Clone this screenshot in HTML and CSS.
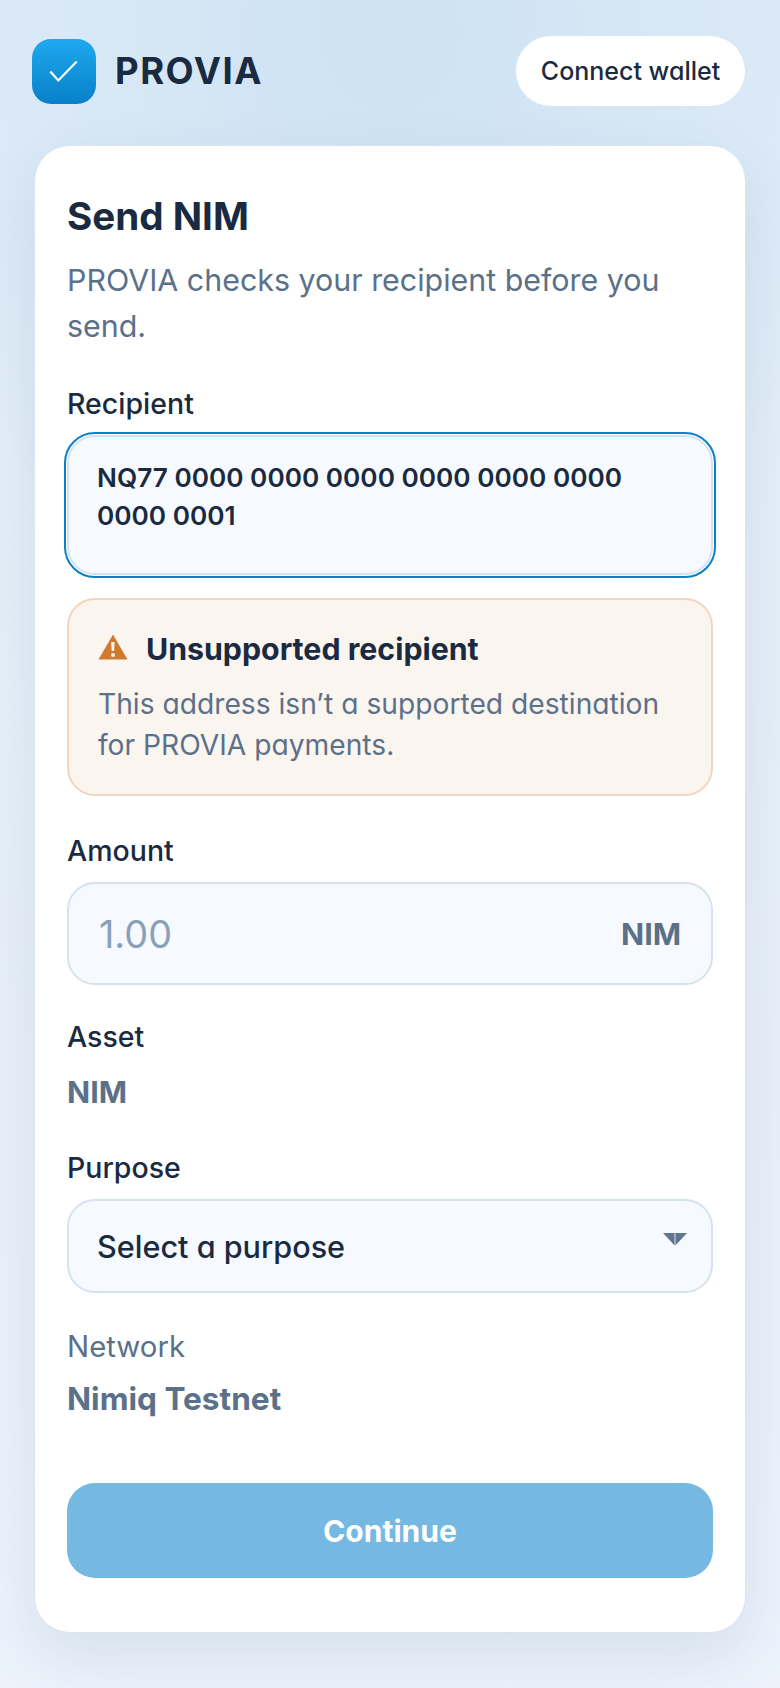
FILE: index.html
```html
<!DOCTYPE html>
<html lang="en">
<head>
  <meta charset="UTF-8">
  <meta name="viewport" content="width=device-width, initial-scale=1.0">
  <title>PROVIA</title>
  <link rel="stylesheet" href="styles.css">
</head>
<body>
  <header class="top-bar">
    <div class="brand">
      <div class="brand-logo">
        <svg width="30" height="24" viewBox="0 0 30 24" fill="none"><path d="M1.3 12.5 L9.3 21.5 L27.7 2.5" stroke="#fff" stroke-width="2.2"/></svg>
      </div>
      <span class="brand-name">PROVIA</span>
    </div>
    <button class="connect-btn">Connect wallet</button>
  </header>

  <main class="card">
    <h1 class="card-title">Send NIM</h1>
    <p class="card-sub">PROVIA checks your recipient before you send.</p>

    <div class="label label-recipient">Recipient</div>
    <div class="recipient-box">NQ77 0000 0000 0000 0000 0000 0000 0000 0001</div>

    <!-- Warning -->
    <div class="warning">
      <div class="warning-head">
        <svg class="warning-icon" width="30" height="26" viewBox="0 0 30 26"><path fill-rule="evenodd" fill="#cf7a30" d="M15 0.5 L29.5 25.5 L0.5 25.5 Z M13.2 8 L13.7 17 L16.1 17 L16.6 8 Z M15 19 A2 2 0 1 0 15 23 A2 2 0 1 0 15 19 Z"/></svg>
        <span>Unsupported recipient</span>
      </div>
      <p class="warning-text">This address isn’t a supported destination for PROVIA payments.</p>
    </div>

    <div class="label label-amount">Amount</div>
    <div class="amount-box">
      <span class="amount-value">1.00</span>
      <span class="amount-unit">NIM</span>
    </div>

    <div class="label label-asset">Asset</div>
    <div class="static-value">NIM</div>

    <div class="label label-purpose">Purpose</div>
    <div class="select-box">
      Select a purpose
      <svg class="select-caret" width="24" height="13" viewBox="0 0 24 13"><path fill="#5f7690" d="M0 0 H11.6 V12.4 Z M12.4 0 H24 L12.4 12.4 Z"/></svg>
    </div>

    <div class="network-label">Network</div>
    <div class="network-value">Nimiq Testnet</div>

    <button class="continue-btn">Continue</button>
  </main>
</body>
</html>
```

FILE: styles.css
```css
* {
  box-sizing: border-box;
}
html, body {
  margin: 0;
  height: 1688px;
  overflow: hidden;
}
body {
  font-family: Inter, "Noto Sans", Arial, sans-serif;
  font-feature-settings: "cv11" 1;
  color: #1a2a40;
  background: radial-gradient(ellipse 520px 620px at 390px 30px, #cde2f3 0%, #d9e8f6 60%, rgba(217,232,246,0) 100%), linear-gradient(180deg, #dfecf8 0%, #e7f0f9 50%, #ecf3fb 100%);
  padding: 35px 34px 0 32px;
}
.top-bar {
  display: flex;
  justify-content: space-between;
  align-items: center;
  height: 72px;
  margin-bottom: 38px;
}
.brand {
  display: flex;
  align-items: center;
  gap: 19px;
}
.brand-logo {
  width: 64px;
  height: 65px;
  border-radius: 19px;
  background: linear-gradient(180deg, #1ea9ee 0%, #0880c8 100%);
  display: flex;
  align-items: center;
  justify-content: center;
}
.brand-name {
  font-size: 36.5px;
  font-weight: 700;
  letter-spacing: 1.5px;
}
.connect-btn {
  width: 231px;
  height: 72px;
  border-radius: 36px;
  border: 1px solid #d9e5f1;
  background: #fff;
  color: #1a2a40;
  font-family: inherit;
  font-feature-settings: inherit;
  font-size: 25px;
  font-weight: 550;
}
.card {
  margin-left: 2px;
  height: 1488px;
  background: #fff;
  border: 1px solid #d9e5f1;
  border-radius: 36px;
  padding: 46px 32px 0;
  box-shadow: 0 24px 60px rgba(60, 90, 130, 0.12);
}
.card-title {
  margin: 0;
  font-size: 38.6px;
  line-height: 48px;
  font-weight: 700;
}
.card-sub {
  margin: 17px 0 0;
  font-size: 30.4px;
  line-height: 46px;
  font-weight: 400;
  color: #5b7089;
}
.label {
  font-size: 28.5px;
  line-height: 36px;
  font-weight: 550;
}
.label-recipient {
  margin-top: 37px;
}
.recipient-box {
  margin-top: 13px;
  height: 140px;
  padding: 22px 28px 0;
  border: 2px solid #d6e2f0;
  border-radius: 28px;
  background: #f6faff;
  outline: 2.5px solid #0a80c8;
  outline-offset: 1px;
  font-size: 26.2px;
  line-height: 38px;
  font-weight: 570;
}
.warning {
  margin-top: 23px;
  height: 198px;
  padding: 29px 29px 0;
  background: #fbf5ef;
  border: 2px solid #f2d5bf;
  border-radius: 28px;
}
.warning-head {
  display: flex;
  align-items: center;
  gap: 18px;
  font-size: 30.3px;
  line-height: 40px;
  font-weight: 700;
}
.warning-icon {
  margin-top: -4px;
}
.warning-text {
  margin: 15px 0 0;
  font-size: 28.2px;
  line-height: 41px;
  color: #5b7089;
}
.label-amount {
  margin-top: 37px;
}
.amount-box {
  margin-top: 13px;
  height: 103px;
  padding: 0 30px;
  display: flex;
  align-items: center;
  justify-content: space-between;
  border: 2px solid #d6e2f0;
  border-radius: 28px;
  background: #f6faff;
}
.amount-value {
  font-size: 37.8px;
  color: #8aa0b8;
}
.amount-unit {
  font-size: 30.4px;
  font-weight: 700;
  color: #5b7089;
}
.label-asset {
  margin-top: 34px;
}
.static-value {
  margin-top: 17px;
  font-size: 30.4px;
  line-height: 40px;
  font-weight: 700;
  color: #5b7089;
}
.label-purpose {
  margin-top: 38px;
}
.select-box {
  position: relative;
  margin-top: 13px;
  height: 94px;
  padding: 0 28px;
  display: flex;
  align-items: center;
  border: 2px solid #d6e2f0;
  border-radius: 28px;
  background: #f6faff;
  font-size: 30.6px;
  font-weight: 550;
}
.select-caret {
  position: absolute;
  right: 24px;
  top: 32px;
}
.network-label {
  margin-top: 36px;
  font-size: 29.4px;
  line-height: 36px;
  color: #5b7089;
}
.network-value {
  margin-top: 14px;
  font-size: 31.6px;
  line-height: 40px;
  font-weight: 700;
  color: #5b7089;
}
.continue-btn {
  display: block;
  width: 100%;
  height: 95px;
  margin-top: 64px;
  border: none;
  border-radius: 28px;
  background: #75b8e2;
  color: #fff;
  font-family: inherit;
  font-feature-settings: inherit;
  font-size: 30.1px;
  font-weight: 700;
}
```
